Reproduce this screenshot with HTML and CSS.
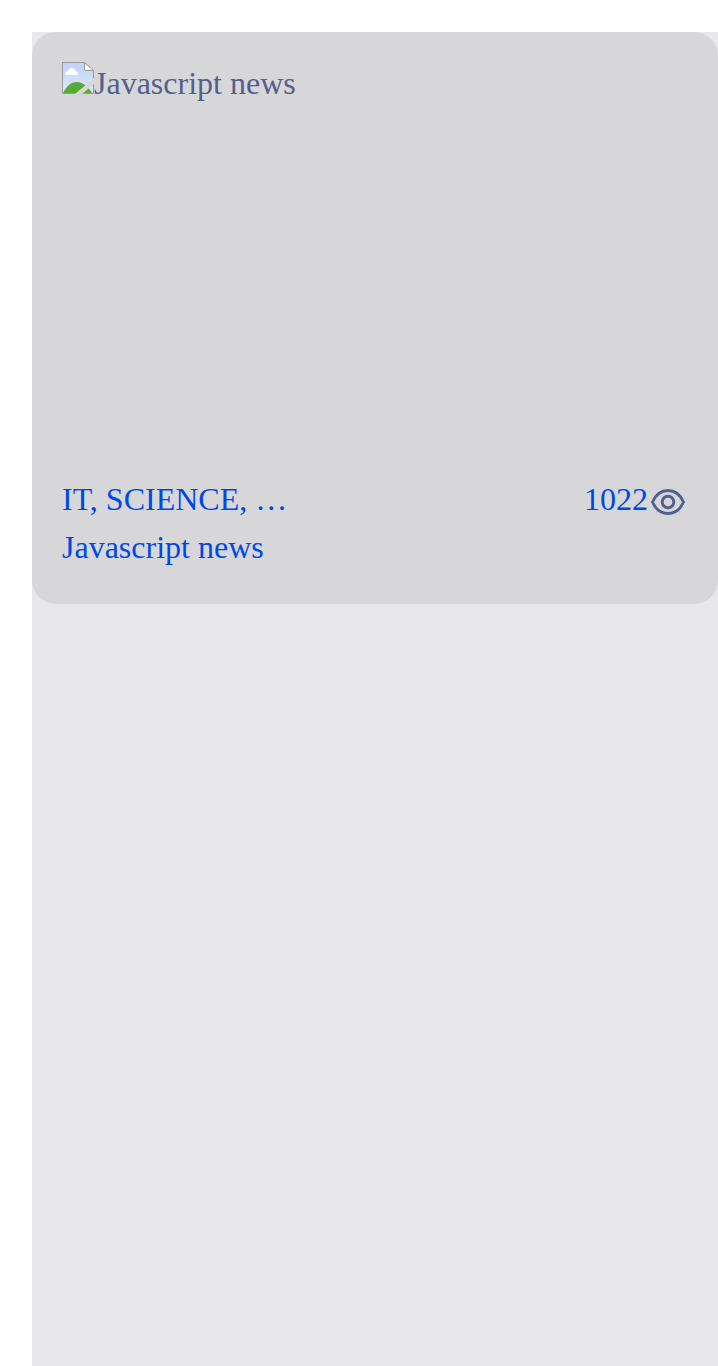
FILE: index.html
```html
<!DOCTYPE html>
<html lang="en">
<head>
<meta charset="utf-8">
<title>News</title>
<link rel="stylesheet" href="styles.css">
</head>
<body>
<main class="panel">
  <article class="card">
    <div class="media">
      <svg class="broken" viewBox="0 0 32 32" aria-hidden="true">
        <defs>
          <linearGradient id="sky" x1="0" y1="0" x2="0" y2="1">
            <stop offset="0" stop-color="#bfd3f7"/>
            <stop offset="1" stop-color="#dce8fd"/>
          </linearGradient>
        </defs>
        <path fill="url(#sky)" d="M.5.500H22.500L31.500 8.500V31.500H.5z"/>
        <path fill="#fff" d="M4.500 13C2.500 13 3 9.500 6 9.300C6.500 5 13 5 13.500 9c3 0 3 4 1 4z"/>
        <path fill="#56ab36" d="M1 31C5 23 10 20 15 20s11 4 15 11z"/>
        <path fill="none" stroke="#999" d="M.5.500H22.500L31.500 8.500V31.500H.5z"/>
        <path fill="#fff" stroke="#999" d="M22.500.500V8.500H31.500z"/>
        <path fill="#d7d7d9" d="M32 16V22L20 32H13L25 22z"/>
      </svg><span class="alt">Javascript news</span>
    </div>
    <div class="meta">
      <a class="tags">IT, SCIENCE, …</a>
      <div class="views">
        <a class="count">1022</a>
        <svg class="eye" viewBox="0 0 40 40" fill="none" stroke="#53608e" stroke-width="2.900" aria-hidden="true">
          <path d="M4.500 20C8 12 14 8.500 20 8.500S32 12 35.500 20C32 28 26 31.500 20 31.500S8 28 4.500 20z"/>
          <circle cx="20" cy="20" r="5.800"/>
        </svg>
      </div>
    </div>
    <a class="title">Javascript news</a>
  </article>
</main>
</body>
</html>
```
FILE: styles.css
```css
body {
  margin: 0;
  padding: 32px 0 0 32px;
  background: #fff;
  font: 32px/48px "Liberation Serif", serif;
  color: #53608e;
}
.panel { height: 1334px; background: #e8e8ea; }
.card {
  box-sizing: border-box;
  height: 572px;
  padding: 30px;
  border-radius: 24px;
  background: #d7d7d9;
}
.media { display: flex; align-items: flex-start; height: 413px; }
.broken { width: 32px; height: 32px; }
.alt { line-height: 43px; }
.meta { display: flex; justify-content: space-between; height: 48px; }
.tags, .count, .title { color: #0048e5; }
.title { display: block; }
.views { display: flex; }
.eye { width: 40px; height: 40px; margin-top: 7px; }
```
